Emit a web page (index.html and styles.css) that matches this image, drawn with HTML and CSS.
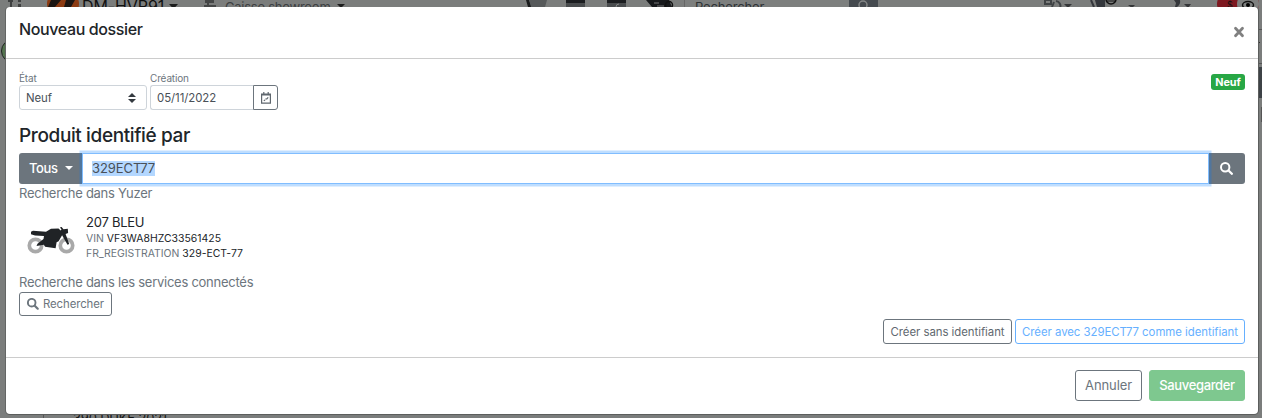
FILE: index.html
```html
<!DOCTYPE html>
<html lang="fr">
<head>
<meta charset="utf-8">
<title>Nouveau dossier</title>
<link rel="stylesheet" href="styles.css">
</head>
<body>
<div class="page">
  <svg class="topbar-art" width="1262" height="418" viewBox="0 0 1262 418">
    <path d="M8 0h5v2H8zM10 2h2v5h-2zM18 0h3v2h-3zM18 4h3v3h-3z" fill="#3e4040"/>
    <ellipse cx="63" cy="4" rx="16" ry="15" fill="#8c3b12"/>
    <path d="M51 0h10l-6 7h-7zM66 0h9l-4 7h-7z" fill="#1b1512"/>
    <path d="M169 4h9l-4.500 5zM337 4h8l-4 4z" fill="#1c1d1d"/>
    <path d="M205 0h9v3h-9zM207 3h2v2h7v4h-12V5h3z" fill="#444646"/>
    <path d="M526 0h3l3 7h-4z" fill="#191b1c"/><path d="M529 0h18l-2 7h-14z" fill="#56595a"/>
    <path d="M566 0h19v3h-19zM607 0h19v3h-19z" fill="#1b1d20"/><path d="M566 3h19v4h-19zM607 3h19v4h-19z" fill="#484b4d"/>
    <path d="M616 7q0-3 3-3" fill="none" stroke="#858787"/>
    <path d="M646 0h23l3 7h-20z" fill="#17191c"/><circle cx="669" cy="5" r="3.500" fill="none" stroke="#111" stroke-width="1.500"/><path d="M654 3h5M657 6h7" stroke="#777"/>
    <path d="M684 0h165v7H684z" fill="#7d7f7e"/><path d="M684.500 0v7" stroke="#666"/>
    <path d="M849 0h29v7h-29z" fill="#454a4f"/><circle cx="863" cy="5" r="4" fill="none" stroke="#858787" stroke-width="1.500"/>
    <path d="M1045 0h6v4h-6zM1052 7l2-5M1056 1a5 5 0 0 1 4 7" fill="none" stroke="#3f4345" stroke-width="2"/>
    <path d="M1064 4h8l-4 4zM1128 5h7l-3 3zM1184 4h7l-3 4z" fill="#343638"/>
    <path d="M1091 0l3 7M1096 0h8v7h-6z" stroke="#34373c" stroke-width="2" fill="#34373c"/><circle cx="1111" cy="-1" r="5" fill="none" stroke="#111" stroke-width="1.500"/><path d="M1107 1h8" stroke="#111"/>
    <path d="M1174 0h6q1 4-3 7h-2l1-4z" fill="#34373b"/>
    <rect x="1217" y="-8" width="42" height="24" rx="12" fill="#7e1820"/><circle cx="1248" cy="4" r="11" fill="#7f8180"/>
    <ellipse cx="1248" cy="5" rx="5.500" ry="3.500" fill="none" stroke="#111" stroke-width="1.500"/><circle cx="1248" cy="5" r="2"/>
    <circle cx="13" cy="51" r="11.500" fill="#54744f" stroke="#202522"/>
    <path d="M1258 29.500h4M1258 63.500h4" stroke="#555"/><path d="M1258 42h2v1h-2z" fill="#333"/><path d="M1258 67h4v31h-4z" fill="#3d4246"/><path d="M1261 107h1v15h-1z" fill="#555"/>
    <path d="M43.500 412v6" stroke="#555"/>
  </svg>
  <div class="topbar">
    <span class="company">DM-HVR91</span>
    <span class="till">Caisse showroom</span>
    <span class="finder">Rechercher</span>
    <span class="currency">$</span>
  </div>
  <div class="list-row">390 DUKE 2021</div>
</div>

<section class="modal">
  <header class="modal-header">
    <h5>Nouveau dossier</h5>
    <button class="close" aria-label="Fermer"><svg width="12" height="12" viewBox="0 0 12 12"><path d="M2.500 2.300l7 7.400M9.500 2.300l-7 7.400" stroke="#808080" stroke-width="2.800" stroke-linecap="round"/></svg></button>
  </header>
  <main class="modal-body">
    <div class="fields">
      <div class="field">
        <label>État</label>
        <div class="select"><span>Neuf</span><svg width="8" height="10" viewBox="0 0 8 10"><path d="M0 4h8L4 0zM0 6h8l-4 4z" fill="#343a40"/></svg></div>
      </div>
      <div class="field">
        <label>Création</label>
        <div class="date-group"><div class="date">05/11/2022</div><div class="calendar"><svg width="10" height="12" viewBox="0 0 10 12" fill="none" stroke="#5f676e"><path d="M.6 2h8.800v9.200H.6zM.6 3h8.800M2.800 0v2M7.200 0v2" stroke-width="1.200"/><path d="M2.800 8.800l1.300-.8M4.300 7h1.500l1.400-1.700" stroke-width="1.200"/></svg></div></div>
      </div>
      <span class="badge">Neuf</span>
    </div>
    <h4>Produit identifié par</h4>
    <div class="search">
      <div class="scope"><span>Tous</span><i class="caret"></i></div>
      <div class="query"><span class="selected">329ECT77</span></div>
      <div class="go"><svg width="13" height="13" viewBox="0 0 13 13" fill="none" stroke="#fff"><circle cx="5.200" cy="5.200" r="4.200" stroke-width="2"/><path d="M8.500 8.500l3.300 3.300" stroke-width="2.300" stroke-linecap="round"/></svg></div>
    </div>
    <p class="hint">Recherche dans Yuzer</p>
    <div class="result">
      <svg class="bike" width="48" height="28" viewBox="0 0 48 28">
        <g fill="none" stroke="#a9a9a9" stroke-width="3.700"><circle cx="8.500" cy="18.500" r="6.200"/><circle cx="39.500" cy="18.500" r="6.200"/></g>
        <path d="M4 4.800l2-1.100 13 1 5-2.900 7.500-.3 2.200 1.900.8-.8-1.500-2 1.400-.8 2.100 2.400 4.300-.4.300 4.200-2.500.9 3.600 10.200-1.700.6-5.400-9.500-3.500 6.100-2 .9-1 6-10.500-1.500-1.300-2-7.300 1.300 1-2.200 6-4.800.5-3-9-.6-4-1.200z" fill="#202326"/>
      </svg>
      <div class="details">
        <div class="name">207 BLEU</div>
        <div class="meta"><span>VIN</span> VF3WA8HZC33561425</div>
        <div class="meta"><span>FR_REGISTRATION</span> 329-ECT-77</div>
      </div>
    </div>
    <p class="hint services">Recherche dans les services connectés</p>
    <button class="btn-sm lookup"><svg width="12" height="12" viewBox="0 0 12 12" fill="none" stroke="#6c757d"><circle cx="4.700" cy="4.700" r="3.800" stroke-width="1.900"/><path d="M7.700 7.700l3 3" stroke-width="2.200" stroke-linecap="round"/></svg><span>Rechercher</span></button>
    <div class="creates">
      <button class="btn-sm without">Créer sans identifiant</button>
      <button class="btn-sm with">Créer avec 329ECT77 comme identifiant</button>
    </div>
  </main>
  <footer class="modal-footer">
    <button class="btn cancel">Annuler</button>
    <button class="btn save">Sauvegarder</button>
  </footer>
</section>
</body>
</html>
```

FILE: styles.css
```css
* { box-sizing: border-box; }
body { margin: 0; width: 1262px; height: 418px; overflow: hidden; background: #7b7d7c; color: #212529; font-family: Inter, "Liberation Sans", sans-serif; }
h4, h5, p { margin: 0; font-weight: 500; }
button { font-family: inherit; margin: 0; padding: 0; background: none; cursor: pointer; }
svg { display: block; flex: none; }

.page { position: absolute; inset: 0; overflow: hidden; display: flex; flex-direction: column; justify-content: space-between; }
.topbar-art { position: absolute; inset: 0; }
.topbar { position: relative; display: flex; height: 20px; margin-top: -4px; line-height: 20px; white-space: nowrap; }
.company { margin-left: 82px; width: 143px; font-size: 16px; color: #111; letter-spacing: -.1px; }
.till { width: 470px; font-size: 13px; line-height: 22px; color: #3d4042; letter-spacing: -.25px; }
.finder { width: 532px; font-size: 13px; line-height: 22px; color: #2e3235; letter-spacing: -.15px; }
.currency { font-size: 9px; line-height: 18px; color: #111; }
.list-row { position: relative; margin-left: 73px; height: 8px; font-size: 13px; line-height: 17px; color: #141515; letter-spacing: -.2px; }

.modal { position: absolute; left: 6px; top: 7px; width: 1252px; height: 407px; display: flex; flex-direction: column; background: #fff; box-shadow: 0 1px 0 #5c5e5d, -1px 0 0 #646665, 1px 0 0 #5c5e5d; border-radius: 4px; }
.modal-header { display: flex; justify-content: space-between; height: 52px; padding: 0 13px; border-bottom: 1px solid #ccc; }
.modal-header h5 { margin-top: 12px; font-size: 16px; line-height: 20px; letter-spacing: -.38px; }
.close { align-self: flex-start; margin-top: 19px; border: 0; }

.modal-body { display: flex; flex-direction: column; height: 299px; padding: 13px 13px 0; border-bottom: 1px solid #ccc; }
.fields { display: flex; gap: 3px; height: 38px; }
.field label { display: block; font-size: 10px; line-height: 13px; height: 13px; color: #6c757d; letter-spacing: -.15px; }
.select { display: flex; align-items: center; justify-content: space-between; width: 128px; height: 25px; padding: 0 10px 0 6px; border: 1px solid #ced4da; border-radius: 3px; font-size: 11.4px; color: #495057; letter-spacing: -.1px; }
.date-group { display: flex; }
.date { width: 103px; height: 25px; padding-left: 6px; border: 1px solid #ced4da; border-right: 0; border-radius: 3px 0 0 3px; font-size: 11.4px; line-height: 24px; color: #495057; letter-spacing: -.05px; }
.calendar { display: flex; align-items: center; justify-content: center; width: 25px; height: 25px; border: 1px solid #6c757d; border-radius: 0 3px 3px 0; }
.badge { margin: 2px 0 0 auto; width: 34px; height: 16px; border-radius: 3px; background: #28a745; color: #fff; font-size: 10.800px; font-weight: 700; line-height: 17px; text-align: center; }
h4 { margin-top: 14px; height: 29px; font-size: 19px; line-height: 24px; letter-spacing: -.38px; }
.search { display: flex; height: 31px; }
.scope { display: flex; align-items: center; gap: 7px; width: 63px; padding: 0 0 1px 10px; background: #6c757d; border-radius: 3px 0 0 3px; color: #fff; font-size: 13px; font-weight: 500; letter-spacing: -.35px; }
.caret { border: 4px solid transparent; border-top-color: #fff; border-bottom: 0; }
.query { position: relative; display: flex; align-items: center; flex: 1; padding-left: 9px; border: 1px solid #80bdff; box-shadow: 0 0 0 2.500px rgba(0,123,255,.25); font-size: 13px; color: #495057; letter-spacing: -.08px; }
.selected { line-height: 15px; background: #b3d7ff; }
.go { display: flex; align-items: center; justify-content: center; width: 36px; padding: 0 1px 1px 0; background: #6c757d; border-radius: 0 3px 3px 0; }
.hint { font-size: 13px; line-height: 19px; height: 20px; font-weight: 400; color: #6c757d; letter-spacing: -.26px; }
.result { display: flex; height: 69px; padding-top: 9px; }
.bike { margin: 14px 11px 0 8px; }
.name { font-size: 13px; line-height: 18px; height: 18px; letter-spacing: -.25px; }
.meta { font-size: 10.450px; line-height: 15px; white-space: nowrap; }
.meta span { color: #6c757d; }
.btn-sm { height: 25px; border: 1px solid #6c757d; border-radius: 3px; color: #5f686f; font-size: 11.400px; line-height: 23px; white-space: nowrap; letter-spacing: -.04px; }
.hint.services { height: 19px; }
.lookup { display: flex; align-items: center; gap: 4px; width: 93px; height: 24px; padding-left: 7px; color: #6c757d; letter-spacing: -.1px; }
.creates { display: flex; justify-content: flex-end; gap: 3px; margin-top: 3px; }
.creates .btn-sm { padding-top: 1px; line-height: 22px; }
.without { width: 129px; }
.with { width: 230px; border-color: #66b0ff; color: #66b0ff; }
.modal-footer { display: flex; justify-content: flex-end; gap: 7px; padding: 12px 13px 0; }
.btn { height: 31px; padding-bottom: 1px; border: 1px solid #6c757d; border-radius: 3px; font-size: 13px; color: #6c757d; letter-spacing: -.1px; }
.cancel { width: 67px; }
.save { width: 96px; border-color: #7ec88f; background: #7ec88f; color: #fff; font-weight: 500; letter-spacing: -.35px; }
```
